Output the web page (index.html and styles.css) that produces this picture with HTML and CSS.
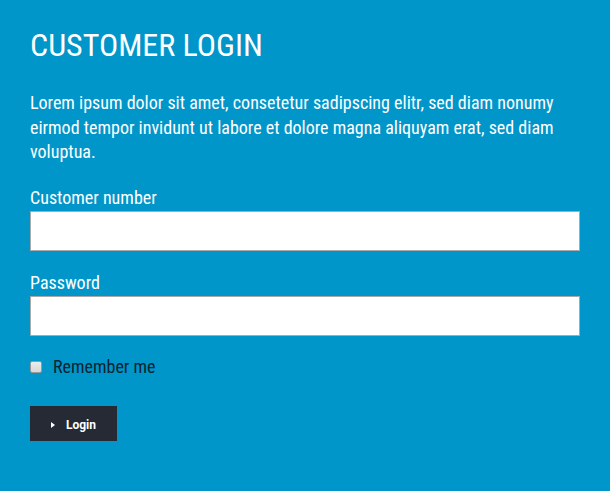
FILE: index.html
```html
<!DOCTYPE html>
<html lang="en">
<head>
<meta charset="utf-8">
<title>Customer Login</title>
<link rel="stylesheet" href="styles.css">
</head>
<body>
<main class="login">
  <h1 class="login__title">CUSTOMER LOGIN</h1>
  <p class="login__intro">Lorem ipsum dolor sit amet, consetetur sadipscing elitr, sed diam nonumy eirmod tempor invidunt ut labore et dolore magna aliquyam erat, sed diam voluptua.</p>
  <form class="login__form">
    <label class="field">
      <span class="field__label">Customer number</span>
      <input class="field__input" type="text">
    </label>
    <label class="field">
      <span class="field__label">Password</span>
      <input class="field__input" type="password">
    </label>
    <label class="remember">
      <input class="remember__box" type="checkbox">
      <span class="remember__text">Remember me</span>
    </label>
    <button class="btn" type="button"><span class="btn__arrow"></span><span class="btn__text">Login</span></button>
  </form>
</main>
</body>
</html>
```
FILE: styles.css
```css
html, body {
  margin: 0;
  padding: 0;
  background: #0096ca;
}
body {
  font-family: Roboto, "Liberation Sans", sans-serif;
  font-stretch: condensed;
  color: #fff;
}
.login {
  padding: 24px 30px 30px;
}
.login__title {
  margin: 0;
  font-size: 32px;
  font-weight: 400;
  line-height: 42px;
}
.login__intro {
  margin: 25px 0 0;
  font-size: 18px;
  font-weight: 400;
  line-height: 24.5px;
}
.login__form {
  margin-top: 21.5px;
  display: flex;
  flex-direction: column;
}
.field {
  display: flex;
  flex-direction: column;
  margin-bottom: 20px;
}
.field__label {
  font-size: 18px;
  font-weight: 400;
  line-height: 24px;
  margin-bottom: 1px;
}
.field__input {
  box-sizing: border-box;
  width: 550px;
  height: 40px;
  margin: 0;
  border: 1px solid #a9a9a9;
  background: #fff;
  outline: none;
}
.remember {
  display: flex;
  align-items: center;
  color: #0b2430;
  font-size: 18px;
  line-height: 24px;
  margin-top: -1px;
}
.remember__box {
  appearance: none;
  -webkit-appearance: none;
  box-sizing: border-box;
  margin: 0 11px 0 0;
  width: 12px;
  height: 12px;
  border: 1px solid #9a9a9a;
  border-radius: 2px;
  background: linear-gradient(#ececec, #d8d8d8);
}
.btn {
  margin-top: 27px;
  align-self: flex-start;
  box-sizing: border-box;
  width: 87px;
  height: 35px;
  border: 0;
  background: #262a35;
  color: #fff;
  font-family: Roboto, sans-serif;
  font-stretch: normal;
  font-size: 12px;
  font-weight: 700;
  display: flex;
  align-items: center;
  gap: 11px;
  padding: 2px 0 0 21px;
}
.btn__arrow {
  width: 0;
  height: 0;
  border-top: 3px solid transparent;
  border-bottom: 3px solid transparent;
  border-left: 4px solid #fff;
}
.btn__text {
  line-height: 14px;
}
```
